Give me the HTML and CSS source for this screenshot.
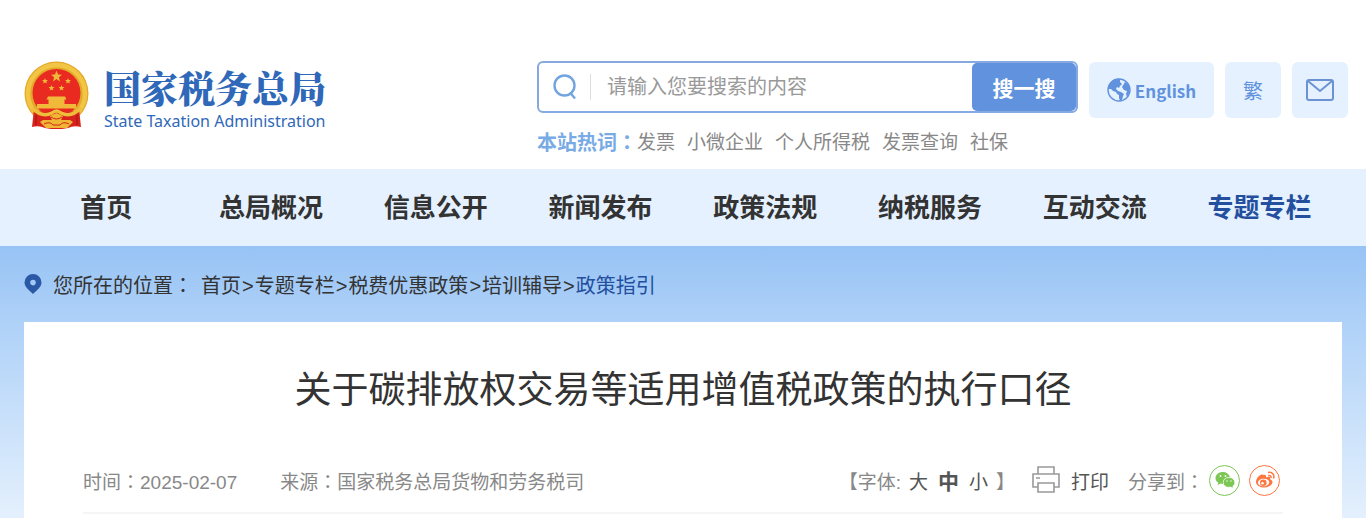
FILE: index.html
```html
<!DOCTYPE html>
<html lang="zh-CN">
    <head>
        <meta charset="UTF-8">
        <meta name="viewport" content="width=device-width, initial-scale=1.0">
        <title>关于碳排放权交易等适用增值税政策的执行口径</title>
        <link rel="stylesheet" href="styles.css">
    </head>
    <body>
        <header class="header">
            <a class="logo" href="#">
                <svg class="emblem" viewBox="0 0 65 70" aria-hidden="true">
                    <circle cx="32.500" cy="32.500" r="32" fill="#e3a92b"/>
                    <circle cx="32.500" cy="32.500" r="28.500" fill="none" stroke="#f2c544" stroke-width="4.500"/>
                    <circle cx="32.500" cy="32" r="24" fill="#e92a20"/>
                    <g fill="#f0b93a">
                        <path d="M32.500 9.500L34 13.600L38 13.800L34.900 16.300L36 20.400L32.500 18L29 20.400L30.100 16.300L27 13.800L31 13.600Z"/>
                        <path d="M21 17l.8 2 2.200.1-1.700 1.400.6 2.100-1.900-1.200-1.900 1.200.6-2.100-1.700-1.400 2.200-.1z"/>
                        <path d="M44 17l.8 2 2.200.1-1.700 1.400.6 2.100-1.900-1.200-1.900 1.200.6-2.100-1.700-1.400 2.200-.1z"/>
                        <path d="M27.500 24l.8 2 2.200.1-1.700 1.400.6 2.100-1.900-1.200-1.900 1.200.6-2.100-1.700-1.400 2.200-.1z"/>
                        <path d="M37.500 24l.8 2 2.200.1-1.700 1.400.6 2.100-1.900-1.200-1.900 1.200.6-2.100-1.700-1.400 2.200-.1z"/>
                        <path d="M24 35.500h17l1.500 3h-2v4.500h11.500v4.500H13V43h11.500v-4.500h-2z"/>
                    </g>
                    <path fill="#d8231d" d="M10 48Q20 54 28 49H37Q45 54 55 48L57 66Q50 64 44 67L38 68H27L21 67Q15 64 8 66Z"/>
                    <path fill="none" stroke="#efbd3a" stroke-width="3.500" d="M8 47Q18 57 28 52Q32.500 48 37 52Q47 57 57 47"/>
                    <path fill="#efb534" d="M26 55l6.500-3 6.500 3-2 4h9l3 2-6 6H22l-6-6 3-2h9z"/>
                    <path fill="none" stroke="#d5201c" stroke-width="1" d="M20 63q6-3 9 1h7q3-4 9-1M27 56q5.500 4 11 0"/>
                    <path fill="none" stroke="#9f1717" stroke-width="1" d="M12 54v10M53 54v10"/>
                </svg>
                <span class="logo-text">
                    <strong>国家税务总局</strong>
                    <span>State Taxation Administration</span>
                </span>
            </a>

            <div class="search">
                <form class="search-box">
                    <svg class="search-icon" viewBox="0 0 24 26" aria-hidden="true">
                        <circle cx="11.500" cy="11.500" r="10" fill="none" stroke="#72a5e0" stroke-width="2.400"/>
                        <path fill="none" stroke="#72a5e0" stroke-width="2.400" d="M17 18.500L22 24.500"/>
                    </svg>
                    <input type="text" aria-label="搜索" placeholder="请输入您要搜索的内容">
                    <button type="submit">搜一搜</button>
                </form>
                <div class="hot">
                    <strong>本站热词<span class="colon">：</span></strong>
                    <a href="#">发票</a>
                    <a href="#">小微企业</a>
                    <a href="#">个人所得税</a>
                    <a href="#">发票查询</a>
                    <a href="#">社保</a>
                </div>
            </div>

            <div class="tools">
                <a class="tool english" href="#">
                    <svg width="24" height="24" viewBox="0 0 24 24" aria-hidden="true">
                        <circle cx="12" cy="12" r="11" fill="none" stroke="#6092de" stroke-width="1.400"/>
                        <path fill="#6092de" d="M13 1Q6 0 2.500 6Q1 8 1 11L4 11L6 13L9 14L10 16L12 17L12 20L13 23L15 22L16 18L17 16L14 14L11 13L9 11L10 9L12 10L13 8L15 6L13 4ZM18 4L15 9L17 12L20 13L19 16L20 19Q23 15 22.500 10Q22 6 18 4Z"/>
                    </svg>
                    <span>English</span>
                </a>
                <a class="tool" href="#">繁</a>
                <a class="tool" href="#" aria-label="邮箱">
                    <svg width="30" height="22" viewBox="0 0 30 22" aria-hidden="true">
                        <rect x="2" y="1" width="26" height="20" rx="2" fill="none" stroke="#6b93d3" stroke-width="2"/>
                        <path fill="none" stroke="#6b93d3" stroke-width="2" d="M3 2L15 12L27 2"/>
                    </svg>
                </a>
            </div>
        </header>

        <nav class="nav">
            <a href="#">首页</a>
            <a href="#">总局概况</a>
            <a href="#">信息公开</a>
            <a href="#">新闻发布</a>
            <a href="#">政策法规</a>
            <a href="#">纳税服务</a>
            <a href="#">互动交流</a>
            <a class="active" href="#">专题专栏</a>
        </nav>

        <main class="main">
            <div class="location">
                <svg width="18" height="20" viewBox="0 0 18 20" aria-hidden="true">
                    <path fill="#2b59a6" fill-rule="evenodd" d="M9 0A8.500 8.500 0 0 0 .5 8.500C.5 13 5 16 9 20C13 16 17.500 13 17.500 8.500A8.500 8.500 0 0 0 9 0ZM9 5.800A2.800 2.800 0 1 1 9 11.400A2.800 2.800 0 0 1 9 5.800Z"/>
                </svg>
                <span class="location-label">您所在的位置<span class="colon">：</span></span>
                <div class="crumbs"><a href="#">首页</a>&gt;<a href="#">专题专栏</a>&gt;<a href="#">税费优惠政策</a>&gt;<a href="#">培训辅导</a>&gt;<a class="current" href="#">政策指引</a></div>
            </div>

            <article class="article">
                <h1>关于碳排放权交易等适用增值税政策的执行口径</h1>
                <div class="info">
                    <span class="date">时间<span class="colon">：</span>2025-02-07</span>
                    <span>来源<span class="colon">：</span>国家税务总局货物和劳务税司</span>
                    <div class="font-size">
                        <span>【字体:</span>
                        <button type="button">大</button>
                        <button type="button" class="selected">中</button>
                        <button type="button">小</button>
                        <span>】</span>
                    </div>
                    <button type="button" class="print">
                        <svg width="28" height="28" viewBox="0 0 28 28" aria-hidden="true">
                            <path fill="none" stroke="#999" stroke-width="1.600" d="M6 8V1H22V8M6 21H1V8H27V21H22M6 17H22V26H6ZM4 12H8"/>
                        </svg>
                        打印
                    </button>
                    <div class="share">
                        <span>分享到<span class="colon">：</span></span>
                        <a class="wechat" href="#" aria-label="微信">
                            <svg width="20" height="18" viewBox="0 0 20 18" aria-hidden="true">
                                <path fill="#7cc653" d="M8 1C3.600 1 .5 3.700.5 7c0 2 1 3.600 2.800 4.700L2.500 14l3-1.400 2.500.4C7.500 8.500 11 6 15 6 14 3 11.500 1 8 1Z"/>
                                <path fill="#7cc653" stroke="#fff" stroke-width=".6" d="M14 6.500c-3.400 0-5.800 2.100-5.800 4.900s2.400 4.900 5.800 4.900l1.900-.2 2.300 1.300-.5-2.100c1.300-1 2-2.300 2-3.900 0-2.800-2.400-4.900-5.700-4.900Z"/>
                                <g fill="#fff"><circle cx="5.500" cy="5" r=".9"/><circle cx="10.500" cy="5" r=".9"/><circle cx="12" cy="10" r=".7"/><circle cx="16" cy="10" r=".7"/></g>
                            </svg>
                        </a>
                        <a class="weibo" href="#" aria-label="微博">
                            <svg width="20" height="18" viewBox="0 0 20 18" aria-hidden="true">
                                <path fill="#ff763f" fill-rule="evenodd" d="M8 4C6 2 1 7 1 11c0 3 3.500 5.500 8 5.500 5 0 8.500-2.800 8.500-5.500 0-1.600-1.300-2.500-2.500-2.800.8-2.300-1.200-3-4-1.800C11.500 4 10 3.300 8 4ZM8.500 7.700c3.500-.2 5.700 1.300 5.700 3.500s-2.400 4-5.600 4.100c-3.300.1-5.600-1.400-5.600-3.600s2.300-3.900 5.500-4Z"/>
                                <circle cx="8.300" cy="11.700" r="3.300" fill="#ff763f"/>
                                <circle cx="7.500" cy="12.200" r="1.300" fill="#fff"/>
                                <path fill="none" stroke="#ff763f" stroke-width="1.500" d="M13 1.500c4-1 7 2.500 5.500 6M13.200 4.500c2-.5 3.300 1 2.700 2.500"/>
                            </svg>
                        </a>
                    </div>
                </div>
            </article>
        </main>
    </body>
</html>
```

FILE: styles.css
```css
*{
    box-sizing: border-box;
}
body{
    margin: 0;
    min-height: 100vh;
    display: flex;
    flex-direction: column;
    background-color: white;
    color: #333;
    font-family: "Liberation Sans", "Noto Sans CJK SC", sans-serif;
    font-size: 19px;
}
a{
    color: inherit;
    text-decoration: none;
}
button{
    border: 0;
    padding: 0;
    background: none;
    color: inherit;
    font: inherit;
    cursor: pointer;
}
svg{
    display: block;
    flex: none;
}
/* colon centred in its full-width cell */
.colon{
    font-family: "Noto Sans CJK TC", sans-serif;
    font-feature-settings: "locl" 0;
}

.header{
    display: flex;
    align-items: flex-start;
    gap: 11px;
    padding: 61px 18px 12px 24px;
}
.logo{
    display: flex;
    gap: 15px;
    margin-right: auto;
    color: #2f68b8;
}
.emblem{
    width: 65px;
    height: 70px;
}
.logo-text{
    display: flex;
    flex-direction: column;
    gap: 3px;
    padding-top: 7px;
    font-family: "Noto Sans", sans-serif;
    font-size: 16px;
    line-height: 24px;
}
.logo-text strong{
    font-family: "Noto Serif CJK SC", "Noto Sans CJK SC", serif;
    font-size: 37px;
    font-weight: 900;
    line-height: 38px;
}

.search{
    flex: 0 1 541px;
}
.search-box{
    display: flex;
    align-items: center;
    height: 52px;
    border: 2px solid #85a9e0;
    border-radius: 6px;
}
.search-icon{
    width: 24px;
    height: 26px;
    margin: 0 13px 0 14px;
}
.search-box input{
    flex: 1;
    min-width: 0;
    height: 26px;
    padding: 0 16px;
    border: 0;
    border-left: 1px solid #ddd;
    outline: none;
    font: inherit;
    font-size: 20px;
}
.search-box input::placeholder{
    color: #999;
}
.search-box button{
    align-self: stretch;
    width: 104px;
    border-radius: 5px;
    background-color: #6092de;
    color: white;
    font-size: 21px;
    font-weight: bold;
}
.hot{
    display: flex;
    align-items: center;
    gap: 12px;
    margin-top: 15px;
    line-height: 28px;
    color: #888;
}
.hot strong{
    margin-right: -12px;
    color: #78abe5;
    font-size: 20px;
}

.tools{
    display: flex;
    gap: 11px;
}
.tool{
    display: flex;
    justify-content: center;
    align-items: center;
    width: 56px;
    height: 56px;
    margin-top: 1px;
    border-radius: 6px;
    background-color: #e5f1ff;
    color: #6092de;
    font-size: 20px;
}
.english{
    gap: 4px;
    width: 125px;
    font-family: "Noto Sans CJK SC", sans-serif;
    font-size: 17px;
    font-weight: bold;
}

.nav{
    display: flex;
    padding: 2px 24px 0;
    background-color: #e5f1ff;
    font-size: 26px;
    font-weight: bold;
    line-height: 75px;
    text-align: center;
}
.nav a{
    flex: 1;
}
.nav .active{
    color: #234f9e;
}

.main{
    flex: 1;
    display: flex;
    flex-direction: column;
    padding: 0 24px;
    background-image: linear-gradient(#97c3f5, #b0d2f8 30%, #e4f0fd);
}
.location{
    display: flex;
    align-items: center;
    height: 76px;
    font-size: 20px;
}
.location-label{
    margin: 0 7px 0 11px;
}
.crumbs a{
    margin: 0 1px;
}
.crumbs .current{
    color: #234f9e;
}

.article{
    flex: 1;
    padding: 39px 59px 0;
    background-color: white;
}
h1{
    margin: 0;
    font-size: 37px;
    font-weight: normal;
    line-height: 60px;
    text-align: center;
}
.info{
    display: flex;
    align-items: center;
    margin-top: 27px;
    height: 66px;
    padding-right: 3px;
    border-bottom: 2px solid #f5f5f5;
    color: #888;
}
.date{
    margin-right: 43px;
}
.font-size{
    display: flex;
    gap: 5px;
    align-items: center;
    margin-left: auto;
}
.font-size button{
    width: 25px;
    color: #555;
}
.font-size .selected{
    font-size: 21px;
    font-weight: bold;
}
.print{
    display: flex;
    align-items: center;
    gap: 11px;
    margin: 0 19px 0 17px;
    color: #555;
}
.share{
    display: flex;
    align-items: center;
}
.share a{
    display: flex;
    justify-content: center;
    align-items: center;
    width: 31px;
    height: 31px;
    margin-left: 5px;
    border: 1px solid;
    border-radius: 50%;
}
.share .wechat{
    color: #7cc653;
}
.share .weibo{
    margin-left: 9px;
    color: #ff763f;
}
```
